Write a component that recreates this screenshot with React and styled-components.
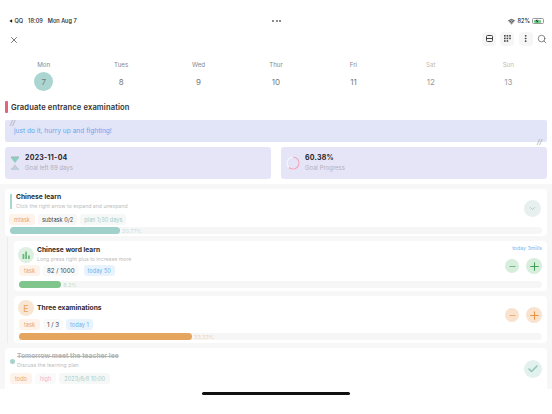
import React from "react";
import styled, { createGlobalStyle } from "styled-components";
import { X, Search, EllipsisVertical, ChevronDown, Minus, Plus, Check, Wifi, Play, Zap } from "lucide-react";

const Global = createGlobalStyle`
  html, body { margin: 0; padding: 0; background: #fff; }
  body { font-family: Inter, "Liberation Sans", sans-serif; }
  * { box-sizing: border-box; }
`;
const Page = styled.div`
  width: 552px; height: 414px; overflow: hidden; display: flex; flex-direction: column; background: #fff; position: relative;
`;
const StatusBar = styled.div`
  height: 12px; margin-top: 15px; padding: 0 8px 0 9px; display: grid; grid-template-columns: 1fr auto 1fr; align-items: center;
  font-size: 5.6px; font-weight: 500; color: #222;
`;
const StatusLeft = styled.div` display: flex; align-items: center; gap: 5px; `;
const Back = styled.span` display: inline-flex; align-items: center; gap: 1.5px; `;
const StatusRight = styled.div` display: flex; align-items: center; justify-content: flex-end; gap: 2px; `;
const Dots = styled.div` display: flex; gap: 1.6px; `;
const Dot = styled.i` width: 2px; height: 2px; border-radius: 50%; background: #666; display: block; `;
const Battery = styled.div`
  width: 12px; height: 6px; border-radius: 1.5px; border: 0.5px solid #9a9a9a; padding: 0.5px;
`;
const BatteryFill = styled.div` height: 100%; background: #6fd583; border-radius: 1px; display: flex; align-items: center; justify-content: center; color: #123; `;
const Toolbar = styled.div`
  height: 24px; margin-top: 1px; padding: 0 5px 0 9px; display: flex; align-items: center; justify-content: space-between;
`;
const Tools = styled.div` display: flex; align-items: center; gap: 4.3px; margin-top: -3px; `;
const Tool = styled.div`
  width: 14px; height: 14px; border-radius: 4px; background: #f6f6f7; display: flex; align-items: center; justify-content: center; color: #333;
`;
const SearchWrap = styled.div` width: 10px; height: 12px; display: flex; align-items: center; color: #444; `;
const Week = styled.div`
  display: grid; grid-template-columns: repeat(7, 1fr); padding: 0 5px; margin-top: 8px;
`;
const DayCol = styled.div`
  display: flex; flex-direction: column; align-items: center; color: ${p => p.$weekend ? "#bcbcbc" : "#888"};
`;
const DayName = styled.div` font-size: 6.2px; line-height: 10px; height: 10px; `;
const DayNum = styled.div`
  margin-top: 2px; width: 19px; height: 19px; border-radius: 50%; font-size: 8px; display: flex; align-items: center; justify-content: center;
  background: ${p => p.$on ? "#aad5d0" : "transparent"}; color: ${p => p.$weekend ? "#999" : "#777"};
`;
const GoalHead = styled.div` display: flex; align-items: center; gap: 3px; padding-left: 5px; margin-top: 10px; height: 12px; `;
const GoalMark = styled.div` width: 3px; height: 12px; background: #e3627f; border-radius: 1px; `;
const GoalTitle = styled.div` font-size: 7.6px; font-weight: 600; color: #333; letter-spacing: 0.12px; `;
const Quote = styled.div`
  position: relative; margin: 7px 5px 0; height: 22px; background: #e2e4f8; border-radius: 2px; padding-left: 9px; display: flex; align-items: center;
  font-size: 6.6px; color: #62a8ee;
`;
const QuoteMark = styled.span`
  position: absolute; font-size: 7px; font-style: italic; color: #999; line-height: 7px;
  ${p => p.$end ? "right: 5px; bottom: -3px;" : "left: 5px; top: -1px;"}
`;
const Stats = styled.div` display: grid; grid-template-columns: 266px 266px; gap: 10px; padding: 0 5px; margin-top: 5px; `;
const Stat = styled.div`
  height: 32px; background: #e6e5f7; border-radius: 3px; display: flex; align-items: center; gap: 5px; padding-left: 5px;
`;
const StatText = styled.div` display: flex; flex-direction: column; gap: 2px; `;
const StatTitle = styled.div` font-size: 7px; font-weight: 700; color: #26262e; line-height: 8px; letter-spacing: 0.25px; `;
const StatSub = styled.div` font-size: 6px; color: #b0b0ba; line-height: 8px; `;
const ListArea = styled.div`
  margin-top: 5px; height: 205px; background: #f7f7f8; padding: 5px 5px 0; display: flex; flex-direction: column; gap: 5px; overflow: hidden;
`;
const Card = styled.div`
  background: #fff; border-radius: 4px; flex: none; height: ${p => p.$h}px; padding: ${p => p.$pad}; display: flex; flex-direction: column;
  margin-left: ${p => p.$indent || 0}px;
`;
const Children = styled.div` display: flex; flex-direction: column; gap: 5px; position: relative; `;
const Rail = styled.div` position: absolute; left: 2px; top: -4px; bottom: 0; width: 1px; background: #ececee; `;
const Row = styled.div` display: flex; align-items: flex-start; justify-content: space-between; flex: 1; `;
const Main = styled.div` display: flex; flex-direction: column; `;
const Head = styled.div` display: flex; align-items: center; gap: ${p => p.$gap || 3}px; margin-top: ${p => p.$mt || 0}px; `;
const Accent = styled.div` width: 2px; height: 15px; background: #a9d6cf; `;
const TodoDot = styled.div` width: 5px; height: 5px; border-radius: 50%; background: #a6d3c9; margin-top: 1px; `;
const Titles = styled.div` display: flex; flex-direction: column; gap: 1px; `;
const Title = styled.div`
  font-size: 6.7px; line-height: 9px; font-weight: 700; color: ${p => p.$done ? "#b5b5b5" : "#2c2c30"};
  text-decoration: ${p => p.$done ? "line-through" : "none"};
`;
const Sub = styled.div` font-size: 5.2px; line-height: 7px; color: #bdbdbd; `;
const Avatar = styled.div`
  width: 16px; height: 16px; margin-left: -1px; border-radius: 50%; background: ${p => p.$bg}; color: ${p => p.$fg}; display: flex; align-items: center; justify-content: center; font-size: 9px;
`;
const Tags = styled.div` display: flex; gap: ${p => p.$gap ?? 3}px; margin-top: ${p => p.$mt}px; margin-left: ${p => p.$ml || 0}px; `;
const Tag = styled.div`
  height: 11px; border-radius: 3px; padding: 0 ${p => p.$px ?? 4}px; background: ${p => p.$bg}; color: ${p => p.$fg}; font-size: ${p => p.$size || 5.6}px; display: flex; align-items: center; white-space: nowrap;
  margin-left: ${p => p.$ml || 0}px;
`;
const Track = styled.div`
  height: 7px; border-radius: 3.5px; background: #f6f6f7; display: flex; align-items: center; gap: 2px; flex: none;
`;
const Fill = styled.div` height: 100%; border-radius: 3.5px; background: ${p => p.$c}; `;
const Pct = styled.div` font-size: 5.4px; color: ${p => p.$c}; `;
const Round = styled.div`
  width: ${p => p.$d}px; height: ${p => p.$d}px; border-radius: 50%; background: ${p => p.$bg}; color: ${p => p.$fg}; display: flex; align-items: center; justify-content: center; flex: none;
  margin-top: ${p => p.$mt || 0}px; margin-right: ${p => p.$mr || 0}px;
`;
const Actions = styled.div` display: flex; flex-direction: column; align-items: flex-end; gap: 6px; padding-top: 1px; `;
const Mills = styled.div` font-size: 5.2px; line-height: 7px; color: #86bff5; font-weight: 500; height: 7px; `;
const Pair = styled.div` display: flex; align-items: center; gap: 7px; margin-top: ${p => p.$mt || 0}px; `;
const Home = styled.div` position: absolute; left: 202px; top: 392px; width: 148px; height: 2.5px; border-radius: 2px; background: #111; `;

const days = [["Mon", 7], ["Tues", 8], ["Wed", 9], ["Thur", 10], ["Fri", 11], ["Sat", 12], ["Sun", 13]];

const Hourglass = () => (
  <svg width="10" height="14" viewBox="0 0 10 14">
    <path d="M1 1h8v1L5 7 1 2z" fill="#8fcdbf" />
    <path d="M5 8l3 4H2z" fill="#c6ccd8" />
    <path d="M1 13h8M1 1h8" stroke="#9bb8c0" strokeWidth="1" />
  </svg>
);
const Ring = () => (
  <svg width="14" height="14" viewBox="0 0 14 14" fill="none">
    <circle cx="7" cy="7" r="6" stroke="#f6f6fc" strokeWidth="1.2" />
    <circle cx="7" cy="7" r="6" stroke="#f2a6bd" strokeWidth="1.2" strokeDasharray="22.7 37.7" transform="rotate(-90 7 7)" />
  </svg>
);
const CardIcon = () => (
  <svg width="7" height="7" viewBox="0 0 7 7" fill="none"><rect x="0.5" y="0.5" width="6" height="6" rx="1" stroke="#444" /><path d="M0.5 3.5h6" stroke="#444" /></svg>
);
const GridIcon = () => (
  <svg width="7" height="7" viewBox="0 0 7 7" fill="#444">
    <rect x="0" y="0" width="1.6" height="1.6" /><rect x="2.6" y="0" width="1.6" height="1.6" /><rect x="5.2" y="0" width="1.6" height="1.6" />
    <rect x="0" y="2.6" width="1.6" height="1.6" /><rect x="2.6" y="2.6" width="1.6" height="1.6" /><rect x="5.2" y="2.6" width="1.6" height="1.6" />
    <rect x="0" y="5.2" width="1.6" height="1.6" /><rect x="2.6" y="5.2" width="1.6" height="1.6" />
  </svg>
);
const Bars = () => (
  <svg width="8" height="8" viewBox="0 0 8 8" fill="#6cba7b"><rect x="0.5" y="3" width="1.8" height="5" /><rect x="3.2" y="0.5" width="1.8" height="7.5" /><rect x="6" y="4.5" width="1.8" height="3.5" /></svg>
);

export default function App() {
  return (
    <Page>
      <Global />
      <StatusBar>
        <StatusLeft>
          <Back><Play size={4} fill="#222" strokeWidth={0} style={{ transform: "rotate(180deg)" }} />QQ</Back>
          <span>18:09</span>
          <span>Mon Aug 7</span>
        </StatusLeft>
        <Dots><Dot /><Dot /><Dot /></Dots>
        <StatusRight>
          <Wifi size={7} strokeWidth={3} color="#222" />
          <span>82%</span>
          <Battery><BatteryFill style={{ width: "82%" }}><Zap size={4} fill="currentColor" strokeWidth={0} /></BatteryFill></Battery>
        </StatusRight>
      </StatusBar>
      <Toolbar>
        <X size={10} color="#333" strokeWidth={1.6} />
        <Tools>
          <Tool><CardIcon /></Tool>
          <Tool><GridIcon /></Tool>
          <Tool><EllipsisVertical size={9} strokeWidth={2.4} /></Tool>
          <SearchWrap><Search size={10} strokeWidth={1.5} /></SearchWrap>
        </Tools>
      </Toolbar>
      <Week>
        {days.map(([n, d], i) => (
          <DayCol key={n} $weekend={i > 4}>
            <DayName>{n}</DayName>
            <DayNum $on={i === 0} $weekend={i > 4}>{d}</DayNum>
          </DayCol>
        ))}
      </Week>
      <GoalHead><GoalMark /><GoalTitle>Graduate entrance examination</GoalTitle></GoalHead>
      <Quote>
        <QuoteMark>//</QuoteMark>
        just do it, hurry up and fighting!
        <QuoteMark $end>//</QuoteMark>
      </Quote>
      <Stats>
        <Stat>
          <Hourglass />
          <StatText><StatTitle>2023-11-04</StatTitle><StatSub>Goal left 89 days</StatSub></StatText>
        </Stat>
        <Stat>
          <Ring />
          <StatText><StatTitle>60.38%</StatTitle><StatSub>Goal Progress</StatSub></StatText>
        </Stat>
      </Stats>
      <ListArea>
        <Card $h={47} $pad="4px 5px 2px 5px">
          <Row>
            <Main>
              <Head $gap={4}>
                <Accent />
                <Titles><Title>Chinese learn</Title><Sub>Click the right arrow to expand and unexpand</Sub></Titles>
              </Head>
              <Tags $mt={4} $ml={-1} $gap={3}>
                <Tag $px={5} $bg="#fdf3ea" $fg="#eaa56a">mtask</Tag>
                <Tag $bg="#f7f7f8" $fg="#444">subtask 0/2</Tag>
                <Tag $bg="#f6f8f8" $fg="#a3cfc9">plan 1/30 days</Tag>
              </Tags>
            </Main>
            <Round $d={17} $bg="#e8efef" $fg="#a4c1bd" $mt={7} $mr={1}><ChevronDown size={9} /></Round>
          </Row>
          <Track><Fill $c="#9fd0c9" style={{ width: "20.7%" }} /><Pct $c="#c9dedb">20.77%</Pct></Track>
        </Card>
        <Children>
          <Rail />
          <Card $h={50} $indent={9} $pad="3px 5px 3px 5px">
            <Row>
              <Main>
                <Head $gap={3} $mt={2}>
                  <Avatar $bg="#ddf0e2" $fg="#6cba7b"><Bars /></Avatar>
                  <Titles><Title>Chinese word learn</Title><Sub>Long press right plus to increase more</Sub></Titles>
                </Head>
                <Tags $mt={2}>
                  <Tag $px={5} $bg="#fdf3ea" $fg="#eaa56a">task</Tag>
                  <Tag $size={6.2} $bg="#f9f9fa" $fg="#444">82 / 1000</Tag>
                  <Tag $ml={2} $bg="#e8f3fd" $fg="#6db2ee">today 50</Tag>
                </Tags>
              </Main>
              <Actions>
                <Mills>today 3mills</Mills>
                <Pair>
                  <Round $d={14} $bg="#d8eedc" $fg="#5fb06f"><Minus size={9} strokeWidth={2.2} /></Round>
                  <Round $d={16} $bg="#d8eedc" $fg="#3f9f52"><Plus size={13} strokeWidth={2} /></Round>
                </Pair>
              </Actions>
            </Row>
            <Track><Fill $c="#80c68c" style={{ width: "8.1%" }} /><Pct $c="#bfe0c5">8.2%</Pct></Track>
          </Card>
          <Card $h={47} $indent={9} $pad="3px 5px 3px 5px">
            <Row>
              <Main>
                <Head $gap={3} $mt={1}>
                  <Avatar $bg="#f8e6d2" $fg="#e7a35e">E</Avatar>
                  <Title>Three examinations</Title>
                </Head>
                <Tags $mt={3}>
                  <Tag $px={5} $bg="#fdf3ea" $fg="#eaa56a">task</Tag>
                  <Tag $size={6.2} $bg="#f9f9fa" $fg="#444">1 / 3</Tag>
                  <Tag $bg="#e8f3fd" $fg="#6db2ee">today 1</Tag>
                </Tags>
              </Main>
              <Pair $mt={8}>
                <Round $d={14} $bg="#f9e3cf" $fg="#eda360"><Minus size={9} strokeWidth={2.2} /></Round>
                <Round $d={16} $bg="#f9e3cf" $fg="#e8933f"><Plus size={13} strokeWidth={2} /></Round>
              </Pair>
            </Row>
            <Track><Fill $c="#e5a55f" style={{ width: "33.1%" }} /><Pct $c="#efd3b3">33.33%</Pct></Track>
          </Card>
        </Children>
        <Card $h={46} $pad="4px 5px 0 5px">
          <Row>
            <Main>
              <Head $gap={2}>
                <TodoDot />
                <Titles>
                  <Title $done>Tomorrow meet the teacher lee</Title>
                  <Sub>Discuss the learning plan</Sub>
                </Titles>
              </Head>
              <Tags $mt={4}>
                <Tag $px={5} $bg="#fdf3ea" $fg="#eaa56a">todo</Tag>
                <Tag $px={5} $bg="#fafafa" $fg="#f0b5c6">high</Tag>
                <Tag $px={5} $bg="#f6f8f8" $fg="#a3cfc9">2023/8/8 10:00</Tag>
              </Tags>
            </Main>
            <Round $d={18} $bg="#e2f1ed" $fg="#8cc4b8" $mt={8}><Check size={12} strokeWidth={3} /></Round>
          </Row>
        </Card>
      </ListArea>
      <Home />
    </Page>
  );
}
